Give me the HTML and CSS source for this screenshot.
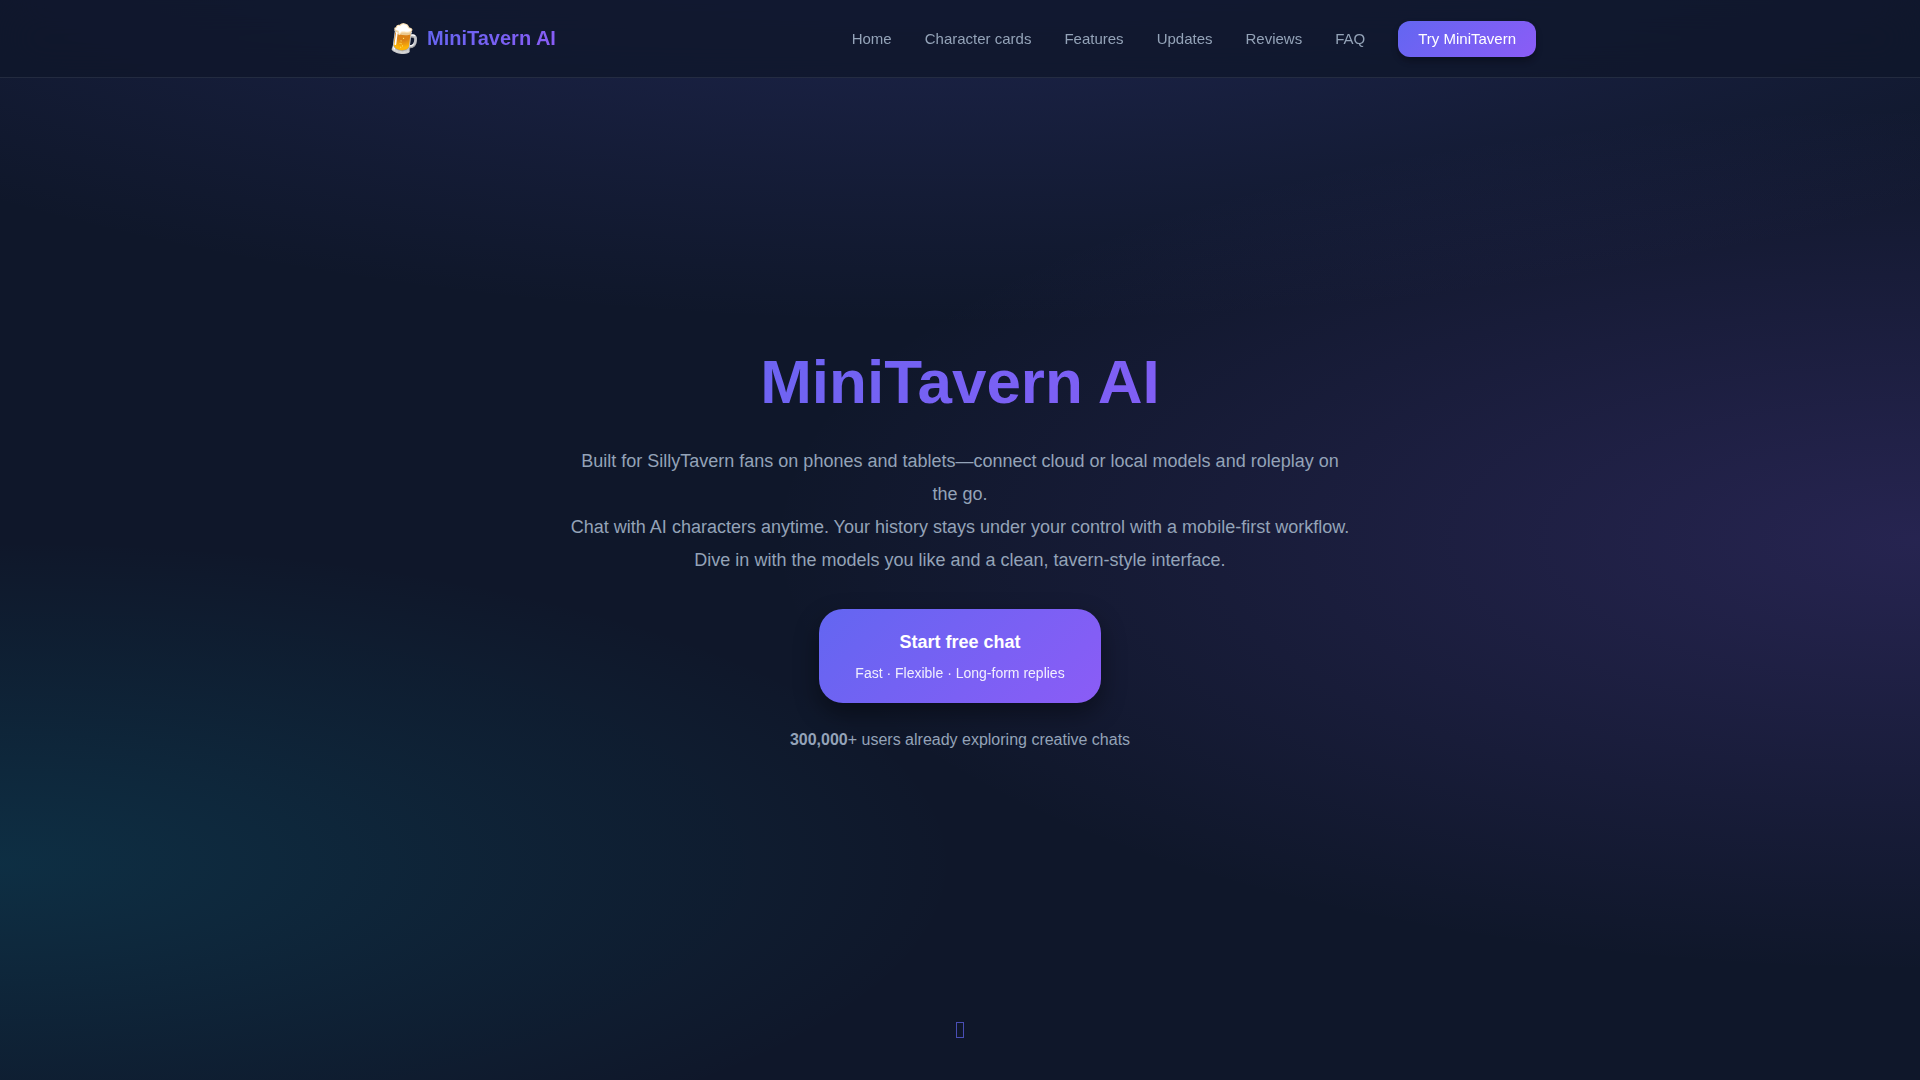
FILE: index.html
```html
<!DOCTYPE html>
<html lang="en">
  <head>
    <meta charset="UTF-8">
    <meta name="viewport" content="width=device-width, initial-scale=1.0">
    <title>MiniTavern AI</title>
    <link rel="stylesheet" href="styles.css">
  </head>
  <body>
    <header class="header">
      <div class="header-inner">
        <a href="#home" class="logo">
          <span class="logo-icon">🍺</span>
          <span class="logo-text">MiniTavern AI</span>
        </a>
        <nav class="nav">
          <a href="#home" class="nav-link">Home</a>
          <a href="#cards" class="nav-link">Character cards</a>
          <a href="#features" class="nav-link">Features</a>
          <a href="#updates" class="nav-link">Updates</a>
          <a href="#reviews" class="nav-link">Reviews</a>
          <a href="#faq" class="nav-link">FAQ</a>
          <a href="#chat" class="nav-cta">Try MiniTavern</a>
        </nav>
      </div>
    </header>

    <main class="hero" id="home">
      <div class="hero-content">
        <h1 class="hero-title">MiniTavern AI</h1>
        <p class="hero-text">
          Built for SillyTavern fans on phones and tablets—connect cloud or local models and roleplay on the go.<br>
          Chat with AI characters anytime. Your history stays under your control with a mobile-first workflow.<br>
          Dive in with the models you like and a clean, tavern-style interface.
        </p>
        <a href="#chat" class="hero-button">
          <span class="button-title">Start free chat</span>
          <span class="button-subtitle">Fast · Flexible · Long-form replies</span>
        </a>
        <p class="hero-stats"><strong>300,000</strong>+ users already exploring creative chats</p>
      </div>
      <a href="#features" class="scroll-down" aria-label="Scroll down"><span class="scroll-mark"></span></a>
    </main>
  </body>
</html>
```

FILE: styles.css
```css
* {
  margin: 0;
  padding: 0;
  box-sizing: border-box;
}
body {
  font-family: "Liberation Sans", Arial, sans-serif;
  color: #94a3b8;
  background-color: #0f172a;
  background-image:
    radial-gradient(ellipse 80% 50% at 50% -20%, rgba(99, 102, 241, 0.25), transparent),
    radial-gradient(ellipse 60% 40% at 100% 50%, rgba(139, 92, 246, 0.19), transparent),
    radial-gradient(ellipse 50% 30% at 0% 80%, rgba(6, 182, 212, 0.15), transparent);
  background-attachment: fixed;
}
a {
  text-decoration: none;
}

/* Header */
.header {
  position: fixed;
  top: 0;
  left: 0;
  right: 0;
  z-index: 10;
  background: rgba(15, 23, 42, 0.8);
  backdrop-filter: blur(20px);
  border-bottom: 1px solid rgba(148, 163, 184, 0.15);
}
.header-inner {
  display: flex;
  justify-content: space-between;
  align-items: center;
  max-width: 1200px;
  margin: 0 auto;
  padding: 20px 24px;
}
.logo {
  display: flex;
  align-items: center;
  gap: 4px;
}
.logo-icon {
  width: 39px;
  font-size: 28px;
  line-height: 37px;
  text-align: center;
  color: #fff;
  transform: rotate(7deg);
}
.logo-text {
  font-size: 20px;
  font-weight: bold;
}
.logo-text,
.hero-title {
  color: transparent;
  background: linear-gradient(135deg, #6366f1, #8b5cf6);
  -webkit-background-clip: text;
  background-clip: text;
}
.nav {
  display: flex;
  align-items: center;
  gap: 33px;
}
.nav-link,
.nav-cta {
  font-size: 15px;
  line-height: 20px;
}
.nav-link {
  color: #94a3b8;
}
.nav-cta {
  padding: 8px 20px;
  color: #fff;
  background: linear-gradient(135deg, #6366f1, #8b5cf6);
  border-radius: 12px;
  box-shadow: 0 4px 6px rgba(0, 0, 0, 0.3);
}

/* Hero */
.hero {
  position: relative;
  display: flex;
  justify-content: center;
  align-items: center;
  min-height: 100vh;
  padding: 96px 24px 80px;
}
.hero-content {
  display: flex;
  flex-direction: column;
  align-items: center;
  max-width: 800px;
  text-align: center;
}
.hero-title {
  width: 100%;
  margin-bottom: 24px;
  font-size: 62px;
  line-height: 78px;
}
.hero-text {
  max-width: 784px;
  margin-bottom: 32px;
  font-size: 18px;
  line-height: 33px;
}
.hero-button {
  display: flex;
  flex-direction: column;
  align-items: center;
  gap: 8px;
  margin-bottom: 24px;
  padding: 20px 36px;
  color: #fff;
  background: linear-gradient(135deg, #6366f1, #8b5cf6);
  border-radius: 24px;
  box-shadow: 0 10px 24px rgba(0, 0, 0, 0.4);
}
.button-title {
  font-size: 18px;
  font-weight: bold;
  line-height: 26px;
}
.button-subtitle {
  font-size: 14px;
  line-height: 20px;
  opacity: 0.9;
}
.hero-stats {
  font-size: 16px;
  line-height: 26px;
}
.scroll-down {
  position: absolute;
  bottom: 32px;
  left: 0;
  right: 0;
  display: flex;
  justify-content: center;
  padding: 10px;
  opacity: 0.7;
}
.scroll-mark {
  width: 8px;
  height: 16px;
  border: 1px solid #6366f1;
}
```
